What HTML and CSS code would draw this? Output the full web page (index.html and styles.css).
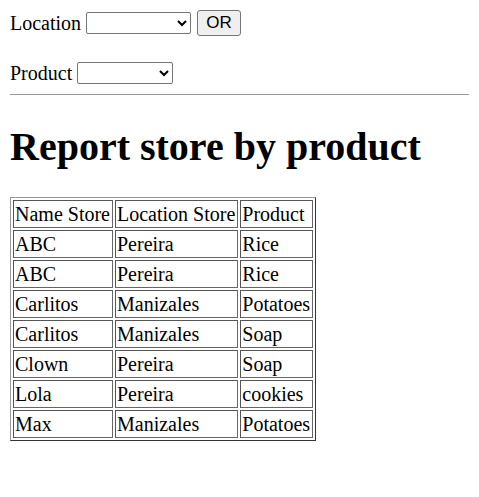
FILE: index.html
```html
<!DOCTYPE html>
<html>
<head>
<meta charset="utf-8">
<link rel="stylesheet" href="styles.css">
</head>
<body>
<form class="filters">
  <div class="row">Location <select class="sel sel-loc"><option></option></select> <button type="button" class="btn">OR</button></div>
  <div class="row row-gap">Product <select class="sel sel-prod"><option></option></select></div>
</form>
<div class="rule"></div>
<h1 class="title">Report store by product</h1>
<table class="report">
  <tr><td>Name Store</td><td>Location Store</td><td>Product</td></tr>
  <tr><td>ABC</td><td>Pereira</td><td>Rice</td></tr>
  <tr><td>ABC</td><td>Pereira</td><td>Rice</td></tr>
  <tr><td>Carlitos</td><td>Manizales</td><td>Potatoes</td></tr>
  <tr><td>Carlitos</td><td>Manizales</td><td>Soap</td></tr>
  <tr><td>Clown</td><td>Pereira</td><td>Soap</td></tr>
  <tr><td>Lola</td><td>Pereira</td><td>cookies</td></tr>
  <tr><td>Max</td><td>Manizales</td><td>Potatoes</td></tr>
</table>
</body>
</html>
```
FILE: styles.css
```css
html, body { background: #fff; }
body {
  margin: 10px;
  font-family: "Liberation Serif", "Times New Roman", serif;
  font-size: 20px;
  color: #000;
}
.filters { margin: 0; }
.row {
  display: flex;
  align-items: center;
  gap: 5px;
  height: 26px;
}
.row-gap { margin-top: 24px; }
.sel {
  height: 22px;
  border: 1px solid #767676;
  border-radius: 2px;
  background: #fff;
  font-family: "Liberation Sans", Arial, sans-serif;
  font-size: 16px;
  padding: 0 4px;
}
.sel-loc { width: 105px; }
.sel-prod { width: 96px; }
.btn {
  height: 26px;
  width: 44px;
  border: 1px solid #767676;
  border-radius: 3px;
  background: #efefef;
  font-family: "Liberation Sans", Arial, sans-serif;
  font-size: 17px;
  color: #000;
  padding: 0;
  margin-left: 1px;
}
.rule {
  width: calc(100vw - 10px);
  margin: 8px 0 0 0;
  border-top: 1px solid #9a9a9a;
  height: 0;
}
.title {
  font-size: 40px;
  font-weight: bold;
  margin: 29px 0 27px 0;
  line-height: 46px;
}
.report {
  border: 1px solid;
  border-color: #9a9a9a #333 #333 #9a9a9a;
  border-spacing: 2px;
}
.report td {
  border: 1px solid;
  border-color: #555 #666 #666 #555;
  padding: 1px 2px 1px 1px;
  line-height: 24px;
  white-space: nowrap;
}
```
